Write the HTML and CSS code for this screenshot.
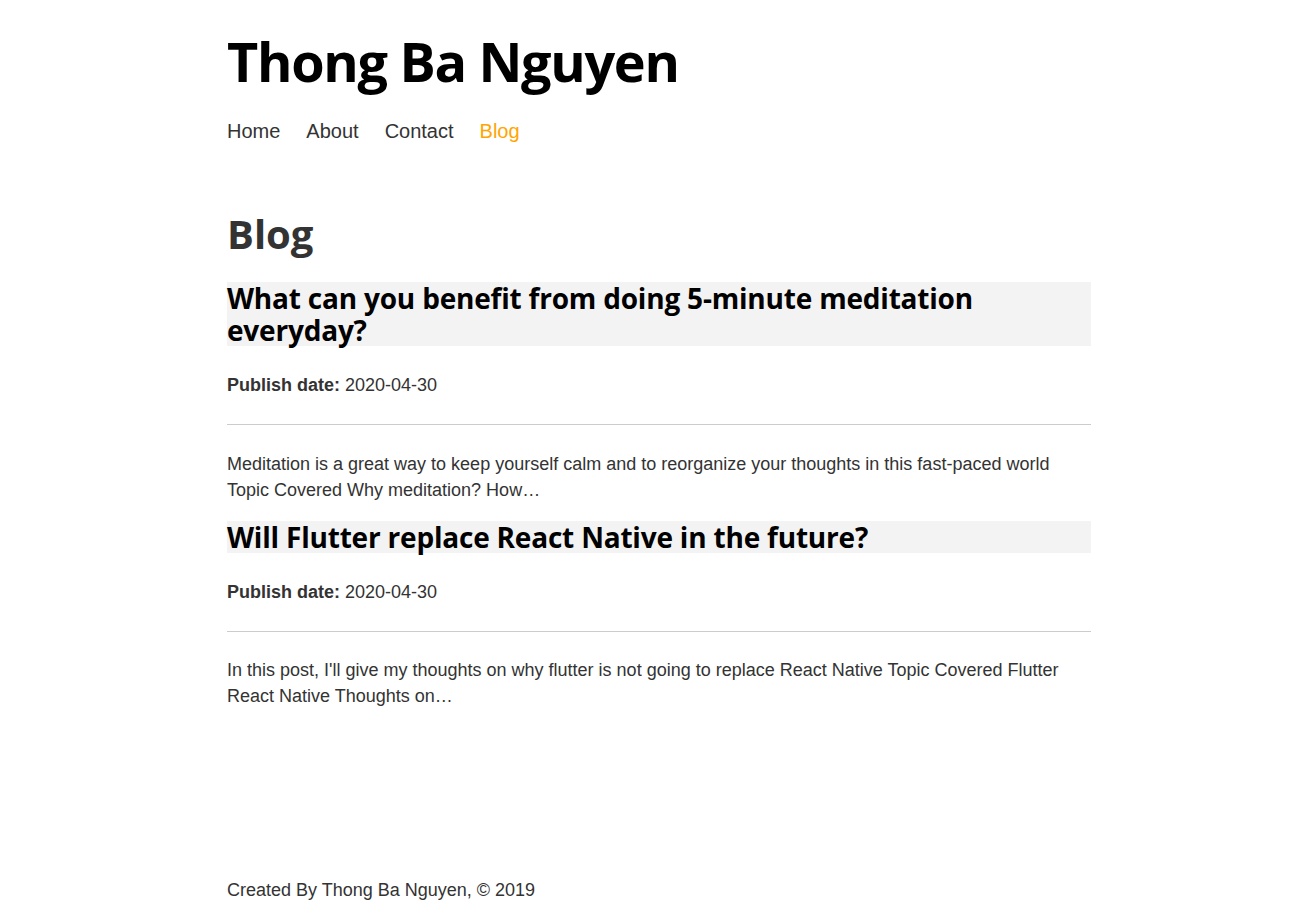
FILE: index.html
```html
<!DOCTYPE html>
<html lang="en">
<head>
<meta charset="utf-8">
<title>Blog | Thong Ba Nguyen</title>
<link rel="stylesheet" href="styles.css">
</head>
<body>
<div class="page">
  <header class="site-header">
    <h1 class="site-title">Thong Ba Nguyen</h1>
    <nav class="nav">
      <a href="#" class="nav-link">Home</a>
      <a href="#" class="nav-link">About</a>
      <a href="#" class="nav-link">Contact</a>
      <a href="#" class="nav-link active">Blog</a>
    </nav>
  </header>
  <main class="content">
    <h1 class="page-title">Blog</h1>
    <article class="post">
      <h2 class="post-title">What can you benefit from doing 5-minute meditation everyday?</h2>
      <p class="post-date"><strong>Publish date:</strong> 2020-04-30</p>
      <hr class="divider">
      <p class="post-excerpt">Meditation is a great way to keep yourself calm and to reorganize your thoughts in this fast-paced world Topic Covered Why meditation? How…</p>
    </article>
    <article class="post">
      <h2 class="post-title">Will Flutter replace React Native in the future?</h2>
      <p class="post-date"><strong>Publish date:</strong> 2020-04-30</p>
      <hr class="divider">
      <p class="post-excerpt">In this post, I'll give my thoughts on why flutter is not going to replace React Native Topic Covered Flutter React Native Thoughts on…</p>
    </article>
  </main>
  <footer class="site-footer">Created By Thong Ba Nguyen, © 2019</footer>
</div>
</body>
</html>
```

FILE: styles.css
```css
html, body {
  margin: 0;
  padding: 0;
  background: #ffffff;
}

body {
  font-family: "Liberation Sans", Arial, sans-serif;
  font-size: 18px;
  line-height: 26px;
  color: #333333;
}

.page {
  width: 864px;
  margin-left: 227px;
  min-height: 908px;
  display: flex;
  flex-direction: column;
}

.site-header {
  padding-top: 25px;
}

.site-title {
  margin: 0;
  font-family: "Open Sans", "Noto Sans", sans-serif;
  font-weight: 700;
  font-size: 54px;
  line-height: 72px;
  color: #000000;
  letter-spacing: -1.3px;
}

.nav {
  display: flex;
  gap: 26px;
  margin-top: 22px;
}

.nav-link {
  font-size: 20px;
  line-height: 24px;
  color: #333333;
  text-decoration: none;
}

.nav-link.active {
  color: #ffa500;
}

.content {
  padding-top: 67px;
}

.page-title {
  margin: 0;
  font-family: "Open Sans", "Noto Sans", sans-serif;
  font-weight: 700;
  font-size: 40px;
  line-height: 48px;
  color: #333333;
}

.post-title {
  margin: 24px 0 0;
  background: #f3f3f3;
  font-family: "Open Sans", "Noto Sans", sans-serif;
  font-weight: 700;
  font-size: 28px;
  line-height: 32px;
  color: #000000;
  letter-spacing: -0.2px;
}

.post + .post .post-title {
  margin-top: 18px;
}

.post-date {
  margin: 26px 0 0;
}

.divider {
  margin: 26px 0 0;
  border: 0;
  border-top: 1px solid #cccccc;
  height: 0;
}

.post-excerpt {
  margin: 26px 0 0;
}

.post + .post .post-excerpt {
  margin-top: 25px;
}

.site-footer {
  margin-top: auto;
  padding-bottom: 5px;
}
```
